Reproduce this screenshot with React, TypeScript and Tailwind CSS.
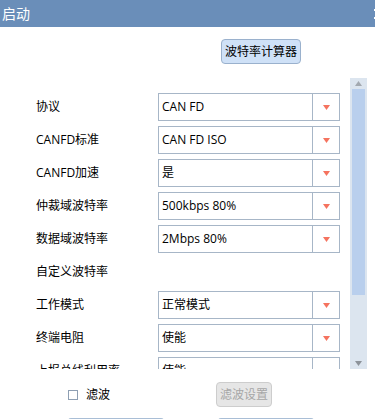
import React from "react";

const FONT = { fontFamily: '"Open Sans", "Noto Sans CJK SC", sans-serif' };

const rows: { label: string; value?: string }[] = [
  { label: "协议", value: "CAN FD" },
  { label: "CANFD标准", value: "CAN FD ISO" },
  { label: "CANFD加速", value: "是" },
  { label: "仲裁域波特率", value: "500kbps 80%" },
  { label: "数据域波特率", value: "2Mbps 80%" },
  { label: "自定义波特率" },
  { label: "工作模式", value: "正常模式" },
  { label: "终端电阻", value: "使能" },
  { label: "上报总线利用率", value: "使能" },
];

function Select({ value }: { value: string }) {
  return (
    <div className="flex h-[28px] w-[182px] border border-[#a7b6c7] bg-white">
      <div className="flex flex-1 items-center pl-[3px] text-[12px] text-black">{value}</div>
      <div className="flex w-[27px] items-center justify-center border-l border-[#a7b6c7]">
        <svg width="7" height="5" viewBox="0 0 7 5">
          <polygon points="0,0 7,0 3.5,5" fill="#f5735f" />
        </svg>
      </div>
    </div>
  );
}

export default function App() {
  return (
    <div className="flex h-[419px] w-[375px] flex-col overflow-hidden bg-white" style={FONT}>
      {/* title */}
      <div className="flex h-[27px] shrink-0 items-center justify-between bg-[#6a8eb9]">
        <span className="pl-[2px] text-[14px] text-white">启动</span>
        <div className="flex h-[10px] w-[1px] flex-col justify-between">
          <div className="h-[2px] bg-white" />
          <div className="h-[2px] bg-white" />
        </div>
      </div>

      <div className="flex h-[51px] shrink-0 items-start pt-[12px] pl-[221px]">
        <button className="h-[25px] w-[80px] rounded-[4px] border border-[#9ab1cd] bg-[#cfe1f7] text-[12px] text-black">
          波特率计算器
        </button>
      </div>

      {/* scroll area */}
      <div className="flex h-[291px] shrink-0 overflow-hidden">
        <div className="flex w-[350px] flex-col gap-[5px] pt-[15px] pl-[36px]">
          {rows.map((r) => (
            <div key={r.label} className="flex h-[28px] shrink-0 items-center">
              <span className="w-[122px] text-[12px] text-black">{r.label}</span>
              {r.value && <Select value={r.value} />}
            </div>
          ))}
        </div>
        <div className="flex w-[17px] flex-col items-center bg-[#dce5ef]">
          <div className="flex h-[11px] items-center justify-center">
            <svg width="7" height="5" viewBox="0 0 7 5">
              <polygon points="3.5,0 7,5 0,5" fill="#a3a9b0" />
            </svg>
          </div>
          <div className="h-[206px] w-[13px] bg-[#b9cfed]" />
          <div className="flex flex-1 items-end justify-center pb-[3px]">
            <svg width="7" height="5" viewBox="0 0 7 5">
              <polygon points="0,0 7,0 3.5,5" fill="#8d939a" />
            </svg>
          </div>
        </div>
      </div>

      {/* bottom */}
      <div className="flex shrink-0 items-center pt-[13px] pl-[68px]">
        <div className="flex w-[148px] items-center">
          <div className="h-[10px] w-[10px] border border-[#8e9fb3] bg-white" />
          <span className="ml-[8px] text-[12px] text-black">滤波</span>
        </div>
        <button className="h-[25px] w-[56px] rounded-[4px] border border-[#cdcdcd] bg-[#e6e6e6] text-[12px] text-[#a6a6a6]">
          滤波设置
        </button>
      </div>
      <div className="flex shrink-0 gap-[54px] pt-[11px] pl-[68px]">
        <div className="h-[24px] w-[96px] shrink-0 rounded-[3px] border-t-2 border-[#a9bed6] bg-[#e8eef6]" />
        <div className="h-[24px] w-[96px] shrink-0 rounded-[3px] border-t-2 border-[#a9bed6] bg-[#e8eef6]" />
      </div>
    </div>
  );
}
